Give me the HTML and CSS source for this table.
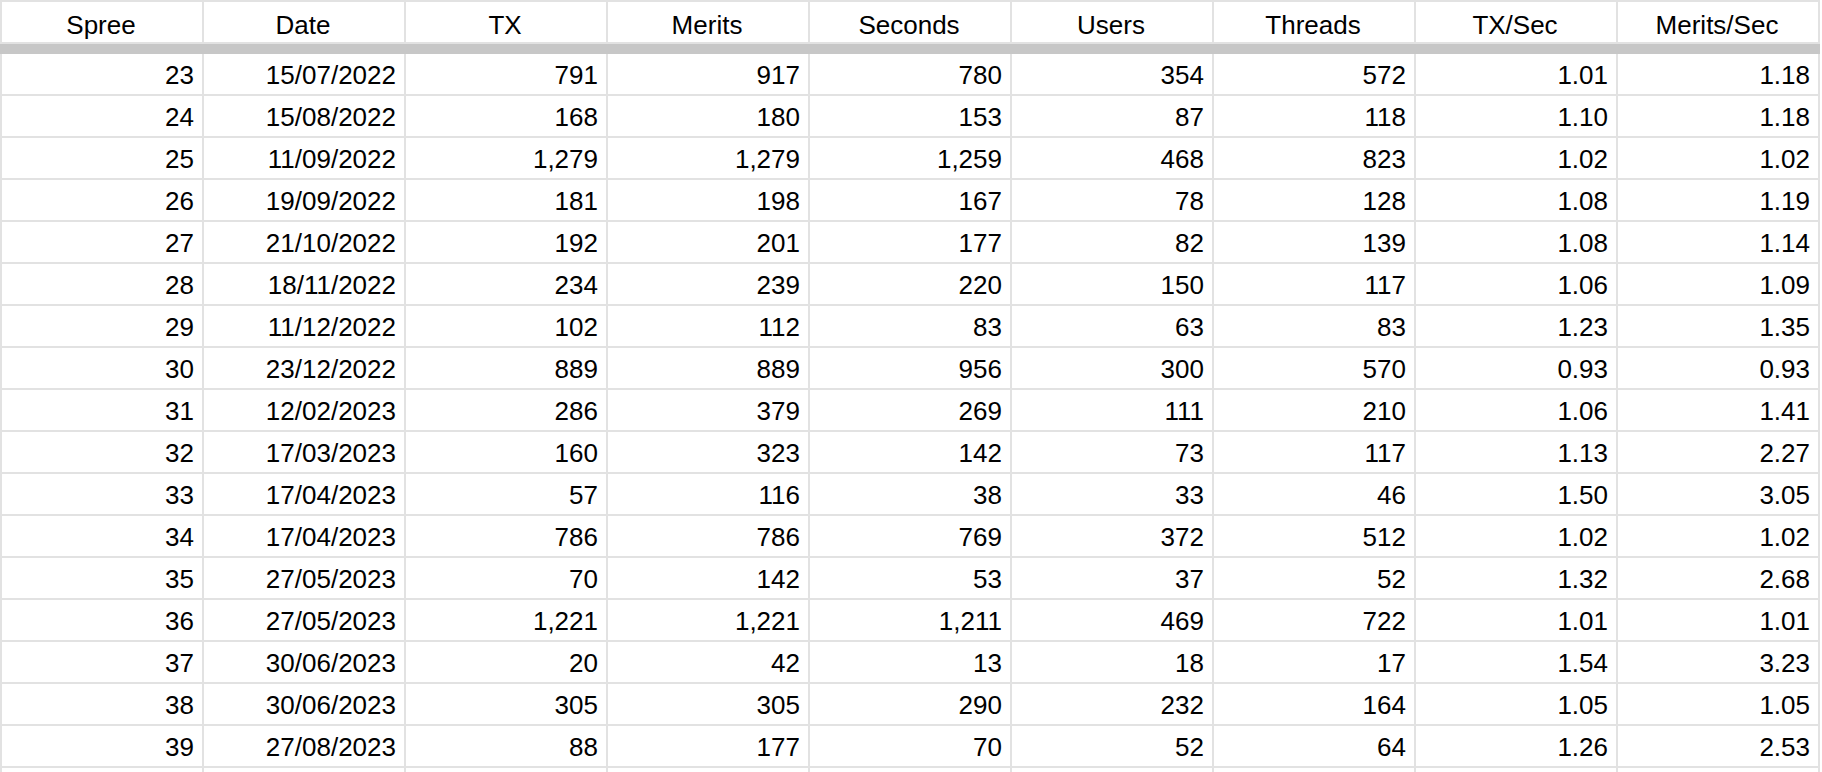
FILE: index.html
```html
<!DOCTYPE html>
<html>
<head>
<meta charset="utf-8">
<link rel="stylesheet" href="styles.css">
</head>
<body>
<div class="sheet">
  <div class="row head">
    <div class="cell">Spree</div><div class="cell">Date</div><div class="cell">TX</div><div class="cell">Merits</div><div class="cell">Seconds</div><div class="cell">Users</div><div class="cell">Threads</div><div class="cell">TX/Sec</div><div class="cell">Merits/Sec</div>
  </div>
  <div class="freeze"></div>
  <div class="row"><div class="cell">23</div><div class="cell">15/07/2022</div><div class="cell">791</div><div class="cell">917</div><div class="cell">780</div><div class="cell">354</div><div class="cell">572</div><div class="cell">1.01</div><div class="cell">1.18</div></div>
  <div class="row"><div class="cell">24</div><div class="cell">15/08/2022</div><div class="cell">168</div><div class="cell">180</div><div class="cell">153</div><div class="cell">87</div><div class="cell">118</div><div class="cell">1.10</div><div class="cell">1.18</div></div>
  <div class="row"><div class="cell">25</div><div class="cell">11/09/2022</div><div class="cell">1,279</div><div class="cell">1,279</div><div class="cell">1,259</div><div class="cell">468</div><div class="cell">823</div><div class="cell">1.02</div><div class="cell">1.02</div></div>
  <div class="row"><div class="cell">26</div><div class="cell">19/09/2022</div><div class="cell">181</div><div class="cell">198</div><div class="cell">167</div><div class="cell">78</div><div class="cell">128</div><div class="cell">1.08</div><div class="cell">1.19</div></div>
  <div class="row"><div class="cell">27</div><div class="cell">21/10/2022</div><div class="cell">192</div><div class="cell">201</div><div class="cell">177</div><div class="cell">82</div><div class="cell">139</div><div class="cell">1.08</div><div class="cell">1.14</div></div>
  <div class="row"><div class="cell">28</div><div class="cell">18/11/2022</div><div class="cell">234</div><div class="cell">239</div><div class="cell">220</div><div class="cell">150</div><div class="cell">117</div><div class="cell">1.06</div><div class="cell">1.09</div></div>
  <div class="row"><div class="cell">29</div><div class="cell">11/12/2022</div><div class="cell">102</div><div class="cell">112</div><div class="cell">83</div><div class="cell">63</div><div class="cell">83</div><div class="cell">1.23</div><div class="cell">1.35</div></div>
  <div class="row"><div class="cell">30</div><div class="cell">23/12/2022</div><div class="cell">889</div><div class="cell">889</div><div class="cell">956</div><div class="cell">300</div><div class="cell">570</div><div class="cell">0.93</div><div class="cell">0.93</div></div>
  <div class="row"><div class="cell">31</div><div class="cell">12/02/2023</div><div class="cell">286</div><div class="cell">379</div><div class="cell">269</div><div class="cell">111</div><div class="cell">210</div><div class="cell">1.06</div><div class="cell">1.41</div></div>
  <div class="row"><div class="cell">32</div><div class="cell">17/03/2023</div><div class="cell">160</div><div class="cell">323</div><div class="cell">142</div><div class="cell">73</div><div class="cell">117</div><div class="cell">1.13</div><div class="cell">2.27</div></div>
  <div class="row"><div class="cell">33</div><div class="cell">17/04/2023</div><div class="cell">57</div><div class="cell">116</div><div class="cell">38</div><div class="cell">33</div><div class="cell">46</div><div class="cell">1.50</div><div class="cell">3.05</div></div>
  <div class="row"><div class="cell">34</div><div class="cell">17/04/2023</div><div class="cell">786</div><div class="cell">786</div><div class="cell">769</div><div class="cell">372</div><div class="cell">512</div><div class="cell">1.02</div><div class="cell">1.02</div></div>
  <div class="row"><div class="cell">35</div><div class="cell">27/05/2023</div><div class="cell">70</div><div class="cell">142</div><div class="cell">53</div><div class="cell">37</div><div class="cell">52</div><div class="cell">1.32</div><div class="cell">2.68</div></div>
  <div class="row"><div class="cell">36</div><div class="cell">27/05/2023</div><div class="cell">1,221</div><div class="cell">1,221</div><div class="cell">1,211</div><div class="cell">469</div><div class="cell">722</div><div class="cell">1.01</div><div class="cell">1.01</div></div>
  <div class="row"><div class="cell">37</div><div class="cell">30/06/2023</div><div class="cell">20</div><div class="cell">42</div><div class="cell">13</div><div class="cell">18</div><div class="cell">17</div><div class="cell">1.54</div><div class="cell">3.23</div></div>
  <div class="row"><div class="cell">38</div><div class="cell">30/06/2023</div><div class="cell">305</div><div class="cell">305</div><div class="cell">290</div><div class="cell">232</div><div class="cell">164</div><div class="cell">1.05</div><div class="cell">1.05</div></div>
  <div class="row"><div class="cell">39</div><div class="cell">27/08/2023</div><div class="cell">88</div><div class="cell">177</div><div class="cell">70</div><div class="cell">52</div><div class="cell">64</div><div class="cell">1.26</div><div class="cell">2.53</div></div>
  <div class="row"><div class="cell"></div><div class="cell"></div><div class="cell"></div><div class="cell"></div><div class="cell"></div><div class="cell"></div><div class="cell"></div><div class="cell"></div><div class="cell"></div></div>
</div>
</body>
</html>
```
FILE: styles.css
```css
html, body {
  margin: 0;
  padding: 0;
  background: #ffffff;
  height: 772px;
  overflow: hidden;
}

.sheet {
  display: flex;
  flex-direction: column;
  gap: 2px;
  width: fit-content;
  padding: 2px 2px 0 2px;
  background: #e2e2e2;
  font-family: "Liberation Sans", Arial, sans-serif;
  font-size: 26px;
  color: #000000;
}

.row {
  display: grid;
  grid-template-columns: repeat(9, 200px);
  column-gap: 2px;
}

.cell {
  height: 40px;
  background: #ffffff;
  box-sizing: border-box;
  padding: 6px 8px 0 6px;
  line-height: 30px;
  text-align: right;
  white-space: nowrap;
  overflow: hidden;
}

.head .cell {
  text-align: center;
  line-height: 40px;
  padding-top: 3px;
}

.freeze {
  height: 10px;
  margin: 0 -2px -2px -2px;
  background: #c7c7c7;
}
```
